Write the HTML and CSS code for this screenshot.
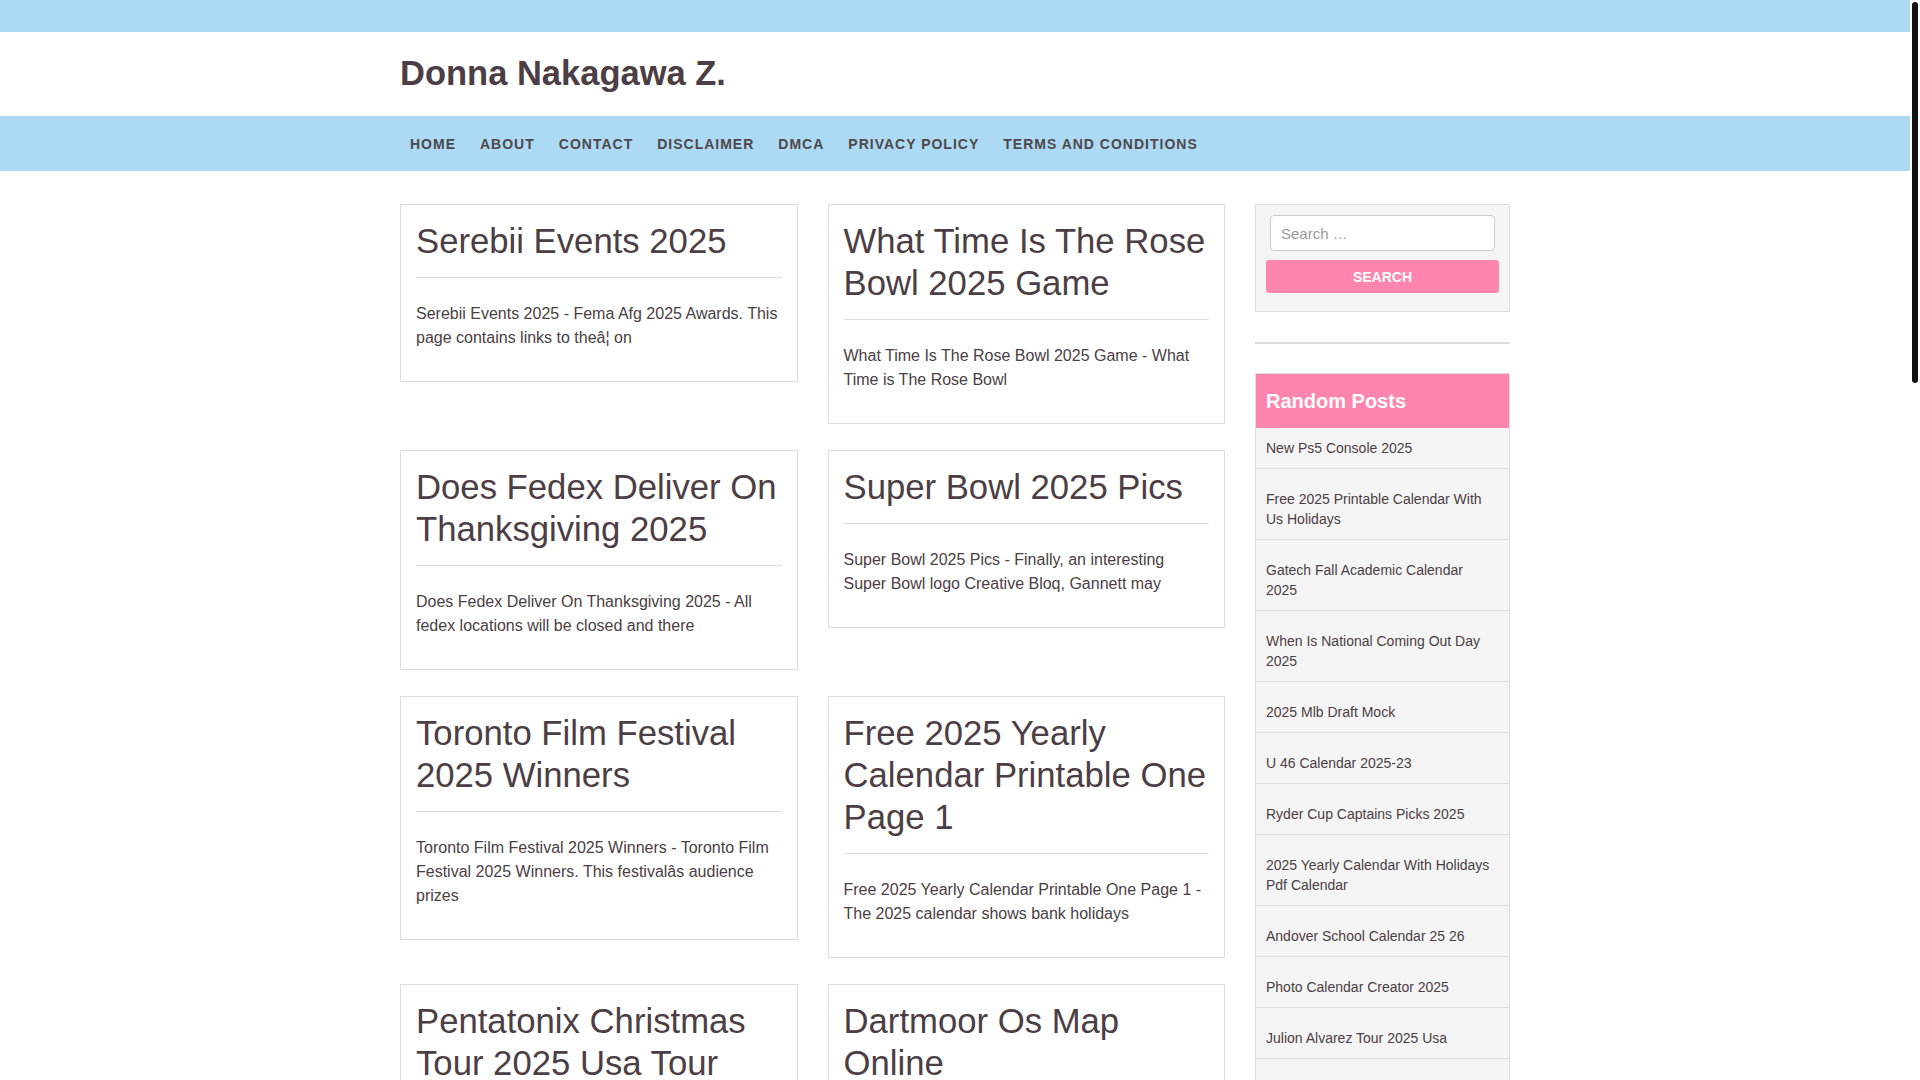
FILE: index.html
```html
<!DOCTYPE html>
<html lang="en">
  <head>
    <meta charset="UTF-8" />
    <meta name="viewport" content="width=device-width, initial-scale=1.0" />
    <title>Donna Nakagawa Z.</title>
    <link rel="stylesheet" href="styles.css">
  </head>
  <body>
    <div class="top-bar"></div>

    <header class="site-header">
      <div class="container">
        <a class="site-title" href="#">Donna Nakagawa Z.</a>
      </div>
    </header>

    <nav class="main-nav">
      <div class="container">
        <ul class="menu">
          <li><a href="#">Home</a></li>
          <li><a href="#">About</a></li>
          <li><a href="#">Contact</a></li>
          <li><a href="#">Disclaimer</a></li>
          <li><a href="#">DMCA</a></li>
          <li><a href="#">Privacy Policy</a></li>
          <li><a href="#">Terms and Conditions</a></li>
        </ul>
      </div>
    </nav>

    <div class="site-content">
      <div class="container content-grid">
        <main class="posts">
          <article class="post-card">
            <h2 class="entry-title"><a href="#">Serebii Events 2025</a></h2>
            <p>Serebii Events 2025 - Fema Afg 2025 Awards. This page contains links to theâ¦ on</p>
          </article>
          <article class="post-card">
            <h2 class="entry-title"><a href="#">What Time Is The Rose Bowl 2025 Game</a></h2>
            <p>What Time Is The Rose Bowl 2025 Game - What Time is The Rose Bowl</p>
          </article>

          <article class="post-card">
            <h2 class="entry-title"><a href="#">Does Fedex Deliver On Thanksgiving 2025</a></h2>
            <p>Does Fedex Deliver On Thanksgiving 2025 - All fedex locations will be closed and there</p>
          </article>
          <article class="post-card">
            <h2 class="entry-title"><a href="#">Super Bowl 2025 Pics</a></h2>
            <p>Super Bowl 2025 Pics - Finally, an interesting Super Bowl logo Creative Bloq, Gannett may</p>
          </article>

          <article class="post-card">
            <h2 class="entry-title"><a href="#">Toronto Film Festival 2025 Winners</a></h2>
            <p>Toronto Film Festival 2025 Winners - Toronto Film Festival 2025 Winners. This festivalâs audience prizes</p>
          </article>
          <article class="post-card">
            <h2 class="entry-title"><a href="#">Free 2025 Yearly Calendar Printable One Page 1</a></h2>
            <p>Free 2025 Yearly Calendar Printable One Page 1 - The 2025 calendar shows bank holidays</p>
          </article>

          <article class="post-card">
            <h2 class="entry-title"><a href="#">Pentatonix Christmas Tour 2025 Usa Tour</a></h2>
            <p>Pentatonix Christmas Tour 2025 Usa Tour - The group returns with a holiday show in</p>
          </article>
          <article class="post-card">
            <h2 class="entry-title"><a href="#">Dartmoor Os Map Online</a></h2>
            <p>Dartmoor Os Map Online - Explore the moor with detailed walking routes and</p>
          </article>

          <article class="post-card">
            <h2 class="entry-title"><a href="#">Nfl Draft Order 2025</a></h2>
            <p>Nfl Draft Order 2025 - The full order for every round of the</p>
          </article>
          <article class="post-card">
            <h2 class="entry-title"><a href="#">Easter Sunday 2025 Date</a></h2>
            <p>Easter Sunday 2025 Date - Easter falls on a different date each year and</p>
          </article>

          <article class="post-card">
            <h2 class="entry-title"><a href="#">Chinese New Year 2025 Animal</a></h2>
            <p>Chinese New Year 2025 Animal - The year of the snake begins on</p>
          </article>
          <article class="post-card">
            <h2 class="entry-title"><a href="#">Monthly Calendar 2025 Template</a></h2>
            <p>Monthly Calendar 2025 Template - Print a blank page for every month of the</p>
          </article>

          <article class="post-card">
            <h2 class="entry-title"><a href="#">Coachella 2025 Lineup</a></h2>
            <p>Coachella 2025 Lineup - The festival announced its headliners for both</p>
          </article>
          <article class="post-card">
            <h2 class="entry-title"><a href="#">Ucf Academic Calendar 2025</a></h2>
            <p>Ucf Academic Calendar 2025 - Key dates for classes, finals and breaks</p>
          </article>

          <article class="post-card">
            <h2 class="entry-title"><a href="#">World Cup 2025 Schedule</a></h2>
            <p>World Cup 2025 Schedule - Match days, kick off times and venues for</p>
          </article>
          <article class="post-card">
            <h2 class="entry-title"><a href="#">Tax Brackets 2025 Married</a></h2>
            <p>Tax Brackets 2025 Married - The new federal income tax rates for couples</p>
          </article>

          <div class="pagination">
            <span class="current">1</span>
            <a href="#">2</a>
            <a href="#">3</a>
            <a href="#">Next</a>
          </div>
        </main>

        <aside class="sidebar">
          <section class="widget widget-search">
            <form class="search-form">
              <input type="search" class="search-field" placeholder="Search …" />
              <button type="submit" class="search-submit">Search</button>
            </form>
          </section>

          <div class="widget-sep"></div>

          <section class="widget widget-list">
            <h3 class="widget-title">Random Posts</h3>
            <ul>
              <li><a href="#">New Ps5 Console 2025</a></li>
              <li><a href="#">Free 2025 Printable Calendar With Us Holidays</a></li>
              <li><a href="#">Gatech Fall Academic Calendar 2025</a></li>
              <li><a href="#">When Is National Coming Out Day 2025</a></li>
              <li><a href="#">2025 Mlb Draft Mock</a></li>
              <li><a href="#">U 46 Calendar 2025-23</a></li>
              <li><a href="#">Ryder Cup Captains Picks 2025</a></li>
              <li><a href="#">2025 Yearly Calendar With Holidays Pdf Calendar</a></li>
              <li><a href="#">Andover School Calendar 25 26</a></li>
              <li><a href="#">Photo Calendar Creator 2025</a></li>
              <li><a href="#">Julion Alvarez Tour 2025 Usa</a></li>
              <li><a href="#">Bank Holidays 2025 Uk</a></li>
              <li><a href="#">Kentucky Derby 2025 Odds</a></li>
              <li><a href="#">Fafsa Deadline 2025-26</a></li>
            </ul>
          </section>
        </aside>
      </div>
    </div>

    <footer class="site-footer">
      <div class="container">Copyright &copy; 2025 Donna Nakagawa Z.</div>
    </footer>

    <!-- slim dark scrollbar, drawn over the right edge -->
    <div class="scroll-track" aria-hidden="true"><div class="scroll-thumb"></div></div>
  </body>
</html>
```

FILE: styles.css
```css
body {
  margin: 0 10px 0 0;
  font-family: "Liberation Sans", Arial, sans-serif;
  font-size: 16px;
  color: #4b3e44;
  background: #fff;
}

a {
  color: inherit;
  text-decoration: none;
}

.scroll-track {
  position: fixed;
  top: 0;
  right: 0;
  width: 10px;
  height: 100vh;
  background: #fff;
}

.scroll-thumb {
  margin: 2px 2px 0;
  width: 6px;
  height: 381px;
  border-radius: 3px;
  background: #111;
}

.container {
  max-width: 1110px;
  margin: 0 auto;
  padding: 0 15px;
}

.top-bar {
  height: 32px;
  background: #acd9f3;
}

.site-header .container {
  height: 84px;
  display: flex;
  align-items: center;
}

.site-title {
  font-size: 34.5px;
  font-weight: bold;
  line-height: 1.2;
}

.main-nav {
  background: #acd9f3;
}

.menu {
  display: flex;
  margin: 0;
  padding: 0;
  list-style: none;
  height: 55px;
  align-items: center;
}

.menu a {
  display: block;
  padding: 0 10px;
  margin-right: 4px;
  font-size: 14px;
  font-weight: bold;
  letter-spacing: 1px;
  text-transform: uppercase;
  color: #4e484b;
}

.site-content {
  padding-top: 33px;
}

.content-grid {
  display: grid;
  grid-template-columns: 825px 255px;
  gap: 30px;
}

/* posts */
.posts {
  display: grid;
  grid-template-columns: 1fr 1fr;
  column-gap: 30px;
  row-gap: 26px;
  align-items: start;
}

.post-card {
  border: 1px solid #ddd;
  padding: 15px;
  background: #fff;
}

.entry-title {
  margin: 0 0 24px;
  padding-bottom: 15px;
  border-bottom: 1px solid #ddd;
  font-size: 34.7px;
  font-weight: normal;
  line-height: 42px;
}

.post-card p {
  margin: 0 0 16px;
  line-height: 24px;
}

.pagination {
  grid-column: 1 / -1;
  display: flex;
  gap: 6px;
  font-size: 14px;
}

.pagination a,
.pagination span {
  padding: 8px 14px;
  border: 1px solid #ddd;
  background: #f4f4f4;
}

.pagination .current {
  background: #ff85ae;
  border-color: #ff85ae;
  color: #fff;
}

/* sidebar */
.widget {
  border: 1px solid #ddd;
  background: #f4f4f4;
}

.widget-search {
  padding: 10px 10px 18px;
}

.search-field {
  display: block;
  box-sizing: border-box;
  width: calc(100% - 8px);
  height: 36px;
  margin: 0 4px;
  padding: 0 10px;
  border: 1px solid #ccc;
  border-radius: 4px;
  background: #fff;
  font-family: inherit;
  font-size: 15px;
  color: #4b3e44;
}

.search-field::placeholder {
  color: #9a9a9a;
}

.search-submit {
  display: block;
  width: 100%;
  height: 33px;
  margin-top: 9px;
  border: 0;
  border-radius: 3px;
  background: #ff85ae;
  color: #fff;
  font-family: inherit;
  font-size: 14px;
  font-weight: bold;
  text-transform: uppercase;
}

.widget-sep {
  height: 2px;
  background: #ddd;
  margin: 30px 0 29px;
}

.widget-title {
  margin: 0;
  padding: 16px 10px;
  background: #ff85ae;
  color: #fff;
  font-size: 20px;
  line-height: 22px;
}

.widget-list ul {
  margin: 0;
  padding: 0;
  list-style: none;
}

.widget-list li {
  padding: 20px 14px 10px 10px;
  border-bottom: 1px solid #ddd;
  font-size: 14px;
  line-height: 20px;
}

.widget-list li:first-child {
  padding-top: 10px;
}

.widget-list li:last-child {
  border-bottom: 0;
}

.site-footer {
  margin-top: 40px;
  padding: 22px 0;
  background: #acd9f3;
  font-size: 14px;
}
```
